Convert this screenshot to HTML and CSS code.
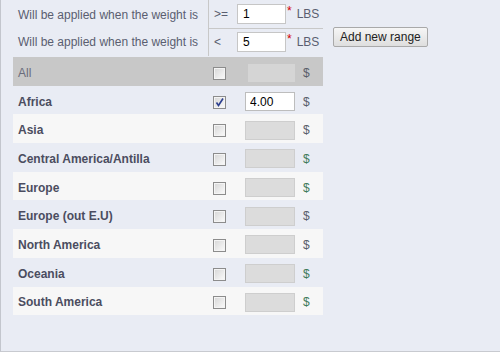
FILE: index.html
```html
<!DOCTYPE html>
<html lang="en">
<head>
    <meta charset="UTF-8">
    <meta name="viewport" content="width=device-width, initial-scale=1.0">
    <title>Shipping Weight Ranges</title>
    <link rel="stylesheet" href="styles.css">
</head>
<body>
    <div class="page">
        <div class="weights">
            <div class="ranges">
                <div class="range-label">Will be applied when the weight is</div>
                <div class="range-op first">&gt;=</div>
                <div class="range-val first"><input type="text" class="range-input" value="1"><span class="req">*</span><span class="unit">LBS</span></div>

                <div class="range-label">Will be applied when the weight is</div>
                <div class="range-op">&lt;</div>
                <div class="range-val"><input type="text" class="range-input" value="5"><span class="req">*</span><span class="unit">LBS</span></div>
            </div>
            <button type="button" class="add-btn">Add new range</button>
        </div>

        <div class="zones">
            <div class="zone zone-all">
                <div class="zone-name">All</div>
                <div class="zone-check"><span class="check"></span></div>
                <div class="zone-price"><span class="price-box all-box"></span></div>
                <div class="zone-cur">$</div>
            </div>
            <div class="zone odd">
                <div class="zone-name">Africa</div>
                <div class="zone-check"><span class="check checked"><svg viewBox="0 0 11 11" width="11" height="11"><path d="M2.5 5.5 L4.5 8.5 L9 1.5" fill="none" stroke="#2c3f8f" stroke-width="1.6"/></svg></span></div>
                <div class="zone-price"><input type="text" class="price-input" value="4.00"></div>
                <div class="zone-cur">$</div>
            </div>
            <div class="zone even">
                <div class="zone-name">Asia</div>
                <div class="zone-check"><span class="check"></span></div>
                <div class="zone-price"><span class="price-box"></span></div>
                <div class="zone-cur">$</div>
            </div>
            <div class="zone odd">
                <div class="zone-name">Central America/Antilla</div>
                <div class="zone-check"><span class="check"></span></div>
                <div class="zone-price"><span class="price-box"></span></div>
                <div class="zone-cur green">$</div>
            </div>
            <div class="zone even">
                <div class="zone-name">Europe</div>
                <div class="zone-check"><span class="check"></span></div>
                <div class="zone-price"><span class="price-box"></span></div>
                <div class="zone-cur green">$</div>
            </div>
            <div class="zone odd">
                <div class="zone-name">Europe (out E.U)</div>
                <div class="zone-check"><span class="check"></span></div>
                <div class="zone-price"><span class="price-box"></span></div>
                <div class="zone-cur">$</div>
            </div>
            <div class="zone even">
                <div class="zone-name">North America</div>
                <div class="zone-check"><span class="check"></span></div>
                <div class="zone-price"><span class="price-box"></span></div>
                <div class="zone-cur">$</div>
            </div>
            <div class="zone odd">
                <div class="zone-name">Oceania</div>
                <div class="zone-check"><span class="check"></span></div>
                <div class="zone-price"><span class="price-box"></span></div>
                <div class="zone-cur green">$</div>
            </div>
            <div class="zone even">
                <div class="zone-name">South America</div>
                <div class="zone-check"><span class="check"></span></div>
                <div class="zone-price"><span class="price-box"></span></div>
                <div class="zone-cur green">$</div>
            </div>
        </div>
    </div>
</body>
</html>
```

FILE: styles.css
```css
body { margin: 0; font-family: "Liberation Sans", Arial, sans-serif; font-size: 12px; color: #555a6a; }
.page { box-sizing: border-box; height: 352px; width: 500px; background: #e9ecf4; border-left: 1px solid #c3c6cd; border-bottom: 1px solid #c8cad0; padding-left: 12px; }

.weights { display: flex; align-items: flex-start; }
.ranges { display: grid; grid-template-columns: 195px 29px 86px; grid-auto-rows: 28px; }
.ranges .first { height: 29px; border-bottom: 1px solid #c8c8c8; box-sizing: border-box; }
.ranges > div:nth-child(1) { height: 29px; }
.range-label { display: flex; align-items: center; padding-left: 5px; color: #5a5e70; }
.range-op { display: flex; align-items: center; border-left: 1px solid #c8c8c8; padding-left: 5px; color: #5a5e70; }
.range-val { display: flex; align-items: center; }
.range-input { box-sizing: border-box; width: 49px; height: 20px; margin: 0; padding: 0 5px; border: 1px solid #c6c6c6; background: #fff; font: 12px "Liberation Sans", Arial, sans-serif; color: #000; }
.req { color: #d40000; align-self: flex-start; margin: 5px 0 0 1px; line-height: 12px; }
.unit { margin-left: 5px; color: #5a5e70; }
.add-btn { margin: 27px 0 0 10px; height: 20px; padding: 0 6px; border: 1px solid #a9a9a9; border-radius: 2px; background: linear-gradient(#f6f6f6, #dedede); font: 12px "Liberation Sans", Arial, sans-serif; color: #222; }

.zones { width: 310px; margin-top: 1px; }
.zone { box-sizing: border-box; display: grid; grid-template-columns: 195px 32px 60px 23px; height: 28.7px; padding-top: 3px; align-items: center; }
.zone-all { background: #c8c8c8; }
.odd { background: #e9ecf4; }
.even { background: #f7f7f7; }
.zone-name { padding-left: 5px; font-weight: bold; color: #4b4d60; }
.zone-all .zone-name { font-weight: normal; color: #6a6c7c; }
.zone-check { padding-left: 5px; display: flex; }
.check { box-sizing: border-box; width: 13px; height: 13px; border: 1px solid #8c8c8c; background: linear-gradient(135deg, #d6d6d6, #fbfbfb); box-shadow: inset 0 0 0 1px #f4f4f4; display: flex; align-items: center; justify-content: center; margin-top: 1px; }
.zone-price { padding-left: 5px; display: flex; }
.price-box { box-sizing: border-box; width: 50px; height: 19px; background: #dcdcdc; border: 1px solid #cecece; }
.all-box { width: 47px; margin-left: 3px; height: 18px; border: none; background: #d5d5d5; }
.price-input { box-sizing: border-box; width: 50px; height: 19px; margin: 0; padding: 0 4px; border: 1px solid #bdbdbd; background: #fff; font: 12px "Liberation Sans", Arial, sans-serif; color: #000; }
.zone-cur { padding-left: 3px; color: #5a5e6a; }
.zone-cur.green { color: #3f7a5a; }
```
